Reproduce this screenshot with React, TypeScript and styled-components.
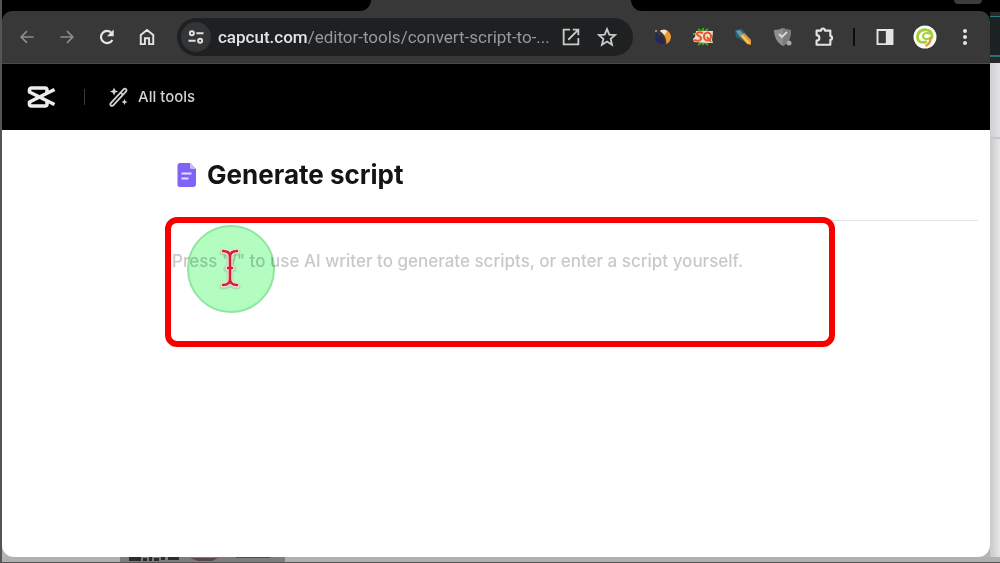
import React from "react";
import styled, { createGlobalStyle, css } from "styled-components";

const GlobalStyle = createGlobalStyle`
  *, *::before, *::after { box-sizing: border-box; }
  html, body, #root { height: 100%; }
  body { margin: 0; background: #4a4a4a; font-family: Inter, "Liberation Sans", sans-serif; }
  button, textarea { font: inherit; border: 0; padding: 0; background: none; color: inherit; }
`;

const Desktop = styled.div`
  display: grid;
  grid-template-columns: 1fr 10px;
  grid-template-rows: 1fr 5px;
  min-height: 100%;
  padding: 0 0 1px 2px;
  background: #555;
`;

const Browser = styled.div`
  display: flex;
  flex-direction: column;
  min-width: 0;
  background: linear-gradient(#000 0 130px, #b4b4b4 130px);
`;

const TabStrip = styled.div`
  display: flex;
  height: 11px;
  background: #383839;
`;

const InactiveTabs = styled.div<{ $side: "left" | "right" }>`
  background: #000;
  ${({ $side }) =>
    $side === "left"
      ? css`width: 369px; border-radius: 0 0 12px 0;`
      : css`flex: 1; border-radius: 0 0 0 12px; display: flex; justify-content: flex-end; padding-right: 8px;`}
`;

const ActiveTab = styled.div`
  width: 260px;
`;

const TabSearch = styled.button`
  width: 28px;
  height: 4px;
  border-radius: 0 0 12px 12px;
  background: #3c3c3d;
`;

const ToolbarBack = styled.div`
  background: #000;
`;

const Toolbar = styled.div`
  display: flex;
  align-items: center;
  gap: 10px;
  height: 53px;
  padding: 0 5px;
  background: #383839;
  border-bottom: 1px solid #4a4a4b;
  border-radius: 10px 10px 0 0;
`;

const Group = styled.div`
  display: flex;
  align-items: center;
`;

const IconButton = styled.button<{ $tone?: string }>`
  display: flex;
  align-items: center;
  justify-content: center;
  width: 40px;
  height: 36px;
  color: ${({ $tone }) => $tone ?? "#e4e4e4"};
`;

const ToolbarRule = styled.div`
  width: 2px;
  height: 18px;
  margin: 0 10px;
  background: #0c0c0c;
`;

const Omnibox = styled.div`
  display: flex;
  flex: 1;
  align-items: center;
  min-width: 0;
  height: 38px;
  padding: 0 8px 0 4px;
  border-radius: 19px;
  background: #1f2021;
`;

const SiteInfo = styled.button`
  display: flex;
  align-items: center;
  justify-content: center;
  flex: none;
  width: 30px;
  height: 30px;
  margin-right: 7px;
  border-radius: 50%;
  background: #343536;
  color: #e0e0e0;
`;

const Address = styled.div`
  flex: 1;
  min-width: 0;
  white-space: nowrap;
  font-family: Roboto, "Liberation Sans", sans-serif;
  font-size: 17px;
  line-height: 24px;
  color: #97989a;
`;

const Host = styled.span`
  color: #e2e3e4;
  font-weight: 500;
`;

const OmniButton = styled(IconButton)`
  flex: none;
  width: 36px;
  color: #c9c9c9;
`;

const SiteHeader = styled.header`
  display: flex;
  align-items: center;
  height: 66px;
  padding: 0 24px;
  background: #000;
`;

const LogoLink = styled.a`
  display: flex;
  color: #ececec;
`;

const HeaderRule = styled.div`
  width: 1px;
  height: 16px;
  margin: 0 24px 0 28px;
  background: #3a3a3a;
`;

const ToolsLink = styled.a`
  display: flex;
  align-items: center;
  gap: 10px;
  color: #d2d2d2;
  font-size: 15px;
  font-weight: 500;
  line-height: 20px;
  text-decoration: none;
`;

const Page = styled.main`
  flex: 1;
  padding: 0 12px 0 170px;
  background: #fff;
  border-radius: 0 0 12px 12px;
`;

const TitleRow = styled.div`
  display: flex;
  align-items: center;
  gap: 10px;
  height: 90px;
  padding-left: 5px;
`;

const Title = styled.h1`
  margin: 0;
  font-size: 26px;
  line-height: 32px;
  font-weight: 700;
  color: #141416;
`;

const Editor = styled.section`
  position: relative;
  border-top: 1px solid #e4e4e6;
`;

const ScriptInput = styled.textarea`
  display: block;
  width: 100%;
  height: 120px;
  padding: 28px 0 0;
  resize: none;
  outline: 0;
  font-size: 17px;
  font-weight: 500;
  line-height: 24px;
  color: #222;
  &::placeholder { color: #c8c9cc; opacity: 1; }
`;

const Highlight = styled.div`
  position: absolute;
  top: -4px;
  left: -7px;
  right: 143px;
  height: 130px;
  border: 6px solid #f60000;
  border-radius: 12px;
  pointer-events: none;
`;

const ClickHalo = styled.div`
  position: absolute;
  top: 4px;
  left: 15px;
  width: 88px;
  height: 88px;
  border: 2px solid #8ee6a0;
  border-radius: 50%;
  background: #b3fdc0;
  mix-blend-mode: multiply;
  pointer-events: none;
`;

const Pointer = styled.svg`
  position: absolute;
  top: 26px;
  left: 46px;
  pointer-events: none;
`;

const RightEdge = styled.div`
  display: flex;
  flex-direction: column;
  background: #dcdcdd;
`;

const EdgeTop = styled.div`
  height: 12px;
  background: #000;
`;

const EdgeBar = styled.div`
  height: 51px;
  border: solid #26282a;
  border-width: 4px 0 6px;
  background: #1c2223;
  box-shadow: inset 0 1px #2f7d80, inset 0 -2px #2f6f70;
`;

const EdgeHeader = styled.div`
  height: 76px;
  border-bottom: 2px solid #c6c6c8;
  background: linear-gradient(90deg, #cfcfd0, #e2e2e4);
`;

const EdgeBody = styled.div`
  flex: 1;
  background: linear-gradient(90deg, #c9c9c9, #e6e6e6);
`;

const BottomEdge = styled.div`
  grid-column: 1 / -1;
  display: flex;
  padding-left: 118px;
  overflow: hidden;
  background: #b0b1b0;
`;

const Thumb = styled.div`
  display: flex;
  width: 165px;
  background: #7d7d7d;
`;

const I = ({ size = 20, children, sw = 2 }: { size?: number; sw?: number; children: React.ReactNode }) => (
  <svg width={size} height={size} viewBox="0 0 24 24" fill="none" stroke="currentColor" strokeWidth={sw} aria-hidden="true">
    {children}
  </svg>
);

const extensions = [
  {
    label: "Swirl extension",
    art: (
      <svg width="20" height="20" viewBox="0 0 20 20">
        <path d="M4 5C2 8 1 13 5 16c3 2 7 1 8-1-5 0-8-4-9-10z" fill="#25265f" />
        <path d="M7 4c5-3 10 0 11 5 0 4-2 7-5 8 1-4-1-9-6-13z" fill="#f09a30" />
        <path d="M7 4c3-2 6-1 7 0l-2 4z" fill="#f1e6d8" />
        <circle cx="3" cy="4" r="1" fill="#aaa" />
        <path d="M8 8c3 2 4 5 3 8-3-1-5-4-5-7z" fill="#292a38" />
      </svg>
    ),
  },
  {
    label: "SQ extension",
    art: (
      <svg width="22" height="22" viewBox="0 0 22 22">
        <path d="M6 3l4 3M16 3l-4 3M1 8h20M2 15h18M6 19l4-3M16 19l-4-3M11 2v17" stroke="#48a52b" strokeWidth="2" />
        <path d="M4 5h17l-1 9 1 3h-5l-14-1-1-3 2-2z" fill="#efdfcb" />
        <g fill="none" stroke="#e8552a" strokeWidth="2">
          <path d="M11 7C8 6 5 6 5 8s5 2 4 5c-1 2-4 2-7 1" />
          <ellipse cx="15.500" cy="10.500" rx="3.500" ry="4" />
          <path d="M15 11l4 5" />
        </g>
      </svg>
    ),
  },
  {
    label: "Pencil extension",
    art: (
      <svg width="20" height="20" viewBox="0 0 20 20">
        <path d="M2 3l7-1 9 11-6 2L3 10z" fill="#286477" />
        <path d="M3 4l4-1 4 5-4 2z" fill="#6a9aa0" />
        <path d="M7 9l4-3 7 7v5l-4-1z" fill="#e09a35" />
        <path d="M8 9l2-1 7 8-2 1z" fill="#f2c66f" />
      </svg>
    ),
  },
  {
    label: "Shield extension",
    art: (
      <svg width="20" height="20" viewBox="0 0 20 20">
        <path d="M1 3c4 0 6-1 9-2 3 1 5 2 8 2 0 7-2 13-8 16C4 16 1 10 1 3z" fill="#8d8d8f" />
        <path d="M10 1c3 1 5 2 8 2 0 7-2 13-8 16z" fill="#7b7b7d" />
        <path d="M6 7l3 3 5-5" fill="none" stroke="#d8d8d8" strokeWidth="1.800" />
        <circle cx="16" cy="16" r="2.500" fill="#a8a8a8" />
      </svg>
    ),
  },
];

const CapcutLogo = () => (
  <svg width="30" height="24" viewBox="0 0 30 24" fill="none" stroke="currentColor" strokeWidth="3.600" strokeLinejoin="round">
    <path d="M21 8V5a2 2 0 0 0-2-2H5.500a2 2 0 0 0-2 2v2L28.500 19.500" />
    <path d="M21 16v3a2 2 0 0 1-2 2H5.500a2 2 0 0 1-2-2v-2L28.500 4.500" />
  </svg>
);

export default function App() {
  return (
    <>
      <GlobalStyle />
      <Desktop>
        <Browser>
          <TabStrip>
            <InactiveTabs $side="left" />
            <ActiveTab />
            <InactiveTabs $side="right">
              <TabSearch aria-label="Search tabs" />
            </InactiveTabs>
          </TabStrip>
          <ToolbarBack>
            <Toolbar>
              <Group>
                <IconButton aria-label="Back" $tone="#8c8c8c">
                  <I><path d="M20 12H5M12 5l-7 7 7 7" /></I>
                </IconButton>
                <IconButton aria-label="Forward" $tone="#8c8c8c">
                  <I><path d="M4 12h15M12 5l7 7-7 7" /></I>
                </IconButton>
                <IconButton aria-label="Reload">
                  <I sw={2.6}>
                    <path d="M18.500 15.500A7.300 7.300 0 1 1 17.600 7.200L19 9" />
                    <path d="M20 3v8h-8z" fill="currentColor" stroke="none" />
                  </I>
                </IconButton>
                <IconButton aria-label="Home">
                  <I sw={2.3}><path d="M4.500 20.500V9.500L12 3.500l7.500 6v11h-5v-7h-5v7z" /></I>
                </IconButton>
              </Group>
              <Omnibox>
                <SiteInfo aria-label="View site information">
                  <I size={18} sw={2.6}>
                    <circle cx="6.500" cy="7" r="2.700" /><path d="M12.500 7H22M2 17h9.500" /><circle cx="17.500" cy="17" r="2.700" />
                  </I>
                </SiteInfo>
                <Address><Host>capcut.com</Host>/editor-tools/convert-script-to-...</Address>
                <OmniButton aria-label="Open in new window">
                  <I size={22}><path d="M11 4H4v16h16v-7M9 15L19 5M14 4h6v6" /></I>
                </OmniButton>
                <OmniButton aria-label="Bookmark this tab">
                  <I size={22}><path d="M12 3.500l2.500 5.900 6.300.5-4.800 4.200 1.500 6.300-5.500-3.400-5.500 3.400L8 14.100 3.200 9.900l6.300-.5z" /></I>
                </OmniButton>
              </Omnibox>
              <Group>
                {extensions.map((e) => (
                  <IconButton key={e.label} aria-label={e.label}>{e.art}</IconButton>
                ))}
                <IconButton aria-label="Extensions">
                  <I size={22} sw={2.3}>
                    <path d="M5 5h5c0-3 4-3 4 0h6v6c2.500 0 2.500 4 0 4v5.500H5V16c4 0 4-6 0-6z" strokeLinejoin="round" />
                  </I>
                </IconButton>
                <ToolbarRule />
                <IconButton aria-label="Side panel">
                  <I size={20} sw={2.3}><path d="M3 3.500h18v17H3z" /><path d="M13 3h8v18h-8z" fill="currentColor" stroke="none" /></I>
                </IconButton>
                <IconButton aria-label="Profile">
                  <svg width="24" height="24" viewBox="0 0 24 24" fill="none">
                    <circle cx="12" cy="12" r="11.500" fill="#fbfdf5" />
                    <path d="M14 16.500C8 19 4 16 4.500 11.500 5 6 10 4 14 5c5 1 6 6 4 9" stroke="#a4cf3a" strokeWidth="2.800" />
                    <path d="M17 9c-2-2-7-1-7 2s4 4 7 2" stroke="#a4cf3a" strokeWidth="2" />
                    <path d="M17.500 12c0 5-1 7-5 9" stroke="#dd9b45" strokeWidth="2.500" />
                  </svg>
                </IconButton>
                <IconButton aria-label="Menu">
                  <svg width="20" height="20" viewBox="0 0 20 20" fill="currentColor">
                    <circle cx="10" cy="4" r="2" /><circle cx="10" cy="10" r="2" /><circle cx="10" cy="16" r="2" />
                  </svg>
                </IconButton>
              </Group>
            </Toolbar>
          </ToolbarBack>
          <SiteHeader>
            <LogoLink href="#" aria-label="CapCut"><CapcutLogo /></LogoLink>
            <HeaderRule />
            <ToolsLink href="#">
              <svg width="19" height="20" viewBox="0 0 19 20" fill="none" stroke="currentColor" strokeWidth="1.800" aria-hidden="true">
                <path d="M1.800 16.200L14.800 2.200a1.500 1.500 0 0 1 2.300 2.100L4.200 18.400a1.600 1.600 0 0 1-2.400-2.200zM11.500 5.600l2.500 2.300" />
                <path d="M5 .5l1.200 2.800L9 4.500 6.200 5.700 5 8.500 3.800 5.700 1 4.500l2.800-1.200zM15.500 12l.9 2.100 2.100.9-2.100.9-.9 2.100-.9-2.100-2.100-.9 2.100-.9z" fill="currentColor" stroke="none" />
              </svg>
              All tools
            </ToolsLink>
          </SiteHeader>
          <Page>
            <TitleRow>
              <svg width="20" height="24" viewBox="0 0 20 24" aria-hidden="true">
                <path d="M3 0h10l6 6v15a3 3 0 0 1-3 3H3a2.500 2.500 0 0 1-2.500-2.500v-19A2.500 2.500 0 0 1 3 0z" fill="#8062f5" />
                <path d="M13 0l6 6h-4.500A1.500 1.500 0 0 1 13 4.500z" fill="#c9bcfb" />
                <path d="M4.500 10.500h10M4.500 15.500h7" stroke="#e3dcff" strokeWidth="1.800" />
              </svg>
              <Title id="script-title">Generate script</Title>
            </TitleRow>
            <Editor>
              <ScriptInput
                aria-labelledby="script-title"
                placeholder={'Press "/" to use AI writer to generate scripts, or enter a script yourself.'}
              />
              <Highlight />
              <ClickHalo />
              <Pointer width="24" height="44" viewBox="0 0 24 44" fill="none" aria-hidden="true">
                <g strokeLinecap="round">
                  <path d="M5 5c4 0 7 2 7 6v22c0 4-3 6-7 6M19 5c-4 0-7 2-7 6M12 33c0 4 3 6 7 6M9 22h6" stroke="#9fb9a4" strokeWidth="7" opacity=".5" />
                  <path d="M5 4c4 0 7 2 7 6v22c0 4-3 6-7 6M19 4c-4 0-7 2-7 6M12 32c0 4 3 6 7 6M10 21h4" stroke="#f7ded8" strokeWidth="5" />
                  <path d="M5 4c4 0 7 2 7 6v22c0 4-3 6-7 6M19 4c-4 0-7 2-7 6M12 32c0 4 3 6 7 6M10 21h4" stroke="#cf2330" strokeWidth="2.500" />
                </g>
              </Pointer>
            </Editor>
          </Page>
        </Browser>
        <RightEdge>
          <EdgeTop />
          <EdgeBar />
          <EdgeHeader />
          <EdgeBody />
        </RightEdge>
        <BottomEdge>
          <Thumb>
            <svg width="165" height="5" viewBox="0 0 165 5" aria-hidden="true">
              <path d="M9 0h12v4H9zM23 1h4v3h-4zM29 0h3v4h-3zM34 1h5v3h-5zM41 0h4v3h-4zM48 0h11v3H48z" fill="#2c2c2c" />
              <path d="M70 1h28l-6 3H78z" fill="#5c4646" />
              <path d="M116 0h34v1h-34zM118 2h8M136 2h6" fill="#4e4e4e" />
            </svg>
          </Thumb>
        </BottomEdge>
      </Desktop>
    </>
  );
}
